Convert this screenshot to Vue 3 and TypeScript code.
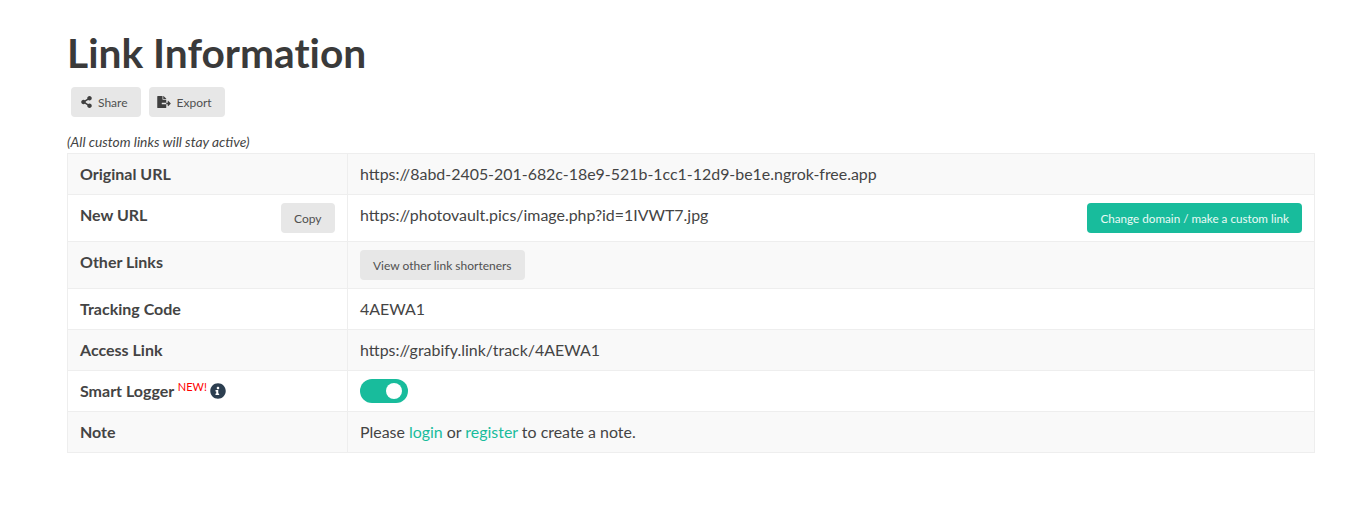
<script setup lang="ts">
const shareIcon = "M352 320c-22.608 0-43.387 7.819-59.79 20.895l-102.486-64.054a96.551 96.551 0 0 0 0-41.683l102.486-64.054C308.613 184.181 329.392 192 352 192c53.019 0 96-42.981 96-96S405.019 0 352 0s-96 42.981-96 96c0 7.158.79 14.13 2.276 20.841L155.79 180.895C139.387 167.819 118.608 160 96 160c-53.019 0-96 42.981-96 96s42.981 96 96 96c22.608 0 43.387-7.819 59.79-20.895l102.486 64.054A96.301 96.301 0 0 0 256 416c0 53.019 42.981 96 96 96s96-42.981 96-96-42.981-96-96-96z";
const exportIcon = "M384 121.9c0-6.3-2.5-12.4-7-16.9L279.1 7c-4.5-4.5-10.6-7-17-7H256v128h128zM571 308l-95.7-96.4c-10.1-10.1-27.4-3-27.4 11.3V288h-64v64h64v65.2c0 14.3 17.3 21.4 27.4 11.3L571 332c6.6-6.6 6.6-17.4 0-24zm-379 28v-32c0-8.8 7.2-16 16-16h176V160H248c-13.2 0-24-10.8-24-24V0H24C10.7 0 0 10.7 0 24v464c0 13.3 10.7 24 24 24h336c13.3 0 24-10.7 24-24V352H208c-8.8 0-16-7.2-16-16z";
const infoIcon = "M256 8C119.043 8 8 119.083 8 256c0 136.997 111.043 248 248 248s248-111.003 248-248C504 119.083 392.957 8 256 8zm0 110c23.196 0 42 18.804 42 42s-18.804 42-42 42-42-18.804-42-42 18.804-42 42-42zm56 254c0 6.627-5.373 12-12 12h-112c-6.627 0-12-5.373-12-12v-24c0-6.627 5.373-12 12-12h12v-64h-12c-6.627 0-12-5.373-12-12v-24c0-6.627 5.373-12 12-12h64c6.627 0 12 5.373 12 12v100h12c6.627 0 12 5.373 12 12v24z";
</script>

<template>
  <main class="page">
    <h1 class="title">Link Information</h1>
    <div class="actions">
      <button class="btn">
        <svg class="icon share" viewBox="0 0 448 512"><path :d="shareIcon" /></svg>Share
      </button>
      <button class="btn">
        <svg class="icon export" viewBox="0 0 576 512"><path :d="exportIcon" /></svg>Export
      </button>
    </div>
    <p class="hint">(All custom links will stay active)</p>
    <table class="info">
      <tbody>
        <tr>
          <th>Original URL</th>
          <td>https://8abd-2405-201-682c-18e9-521b-1cc1-12d9-be1e.ngrok-free.app</td>
        </tr>
        <tr>
          <th>
            <div class="split">New URL<button class="btn">Copy</button></div>
          </th>
          <td>
            <div class="split">
              https://photovault.pics/image.php?id=1IVWT7.jpg
              <button class="btn primary">Change domain / make a custom link</button>
            </div>
          </td>
        </tr>
        <tr>
          <th>Other Links</th>
          <td><button class="btn">View other link shorteners</button></td>
        </tr>
        <tr>
          <th>Tracking Code</th>
          <td>4AEWA1</td>
        </tr>
        <tr>
          <th>Access Link</th>
          <td>https://grabify.link/track/4AEWA1</td>
        </tr>
        <tr>
          <th>
            Smart Logger <sup class="new">NEW!</sup>
            <svg class="info-icon" viewBox="0 0 512 512"><path :d="infoIcon" /></svg>
          </th>
          <td class="toggle-cell">
            <span class="toggle"><span class="knob"></span></span>
          </td>
        </tr>
        <tr>
          <th>Note</th>
          <td>Please <a href="#">login</a> or <a href="#">register</a> to create a note.</td>
        </tr>
      </tbody>
    </table>
  </main>
</template>

<style scoped>
.page {
  padding: 0 44px 0 67px;
  font-family: Lato, "Liberation Sans", sans-serif;
  font-size: 16px;
  line-height: 24px;
  color: #444;
}
.title {
  margin: 0;
  padding-top: 29px;
  font-size: 40.7px;
  line-height: 48px;
  font-weight: 700;
  font-variant-ligatures: none;
  color: #3a3a3a;
}
.actions {
  display: flex;
  gap: 8px;
  margin: 10px 0 0 4px;
}
.btn {
  display: inline-flex;
  align-items: center;
  height: 30px;
  padding: 0 13px;
  border: 0;
  border-radius: 4px;
  background: #e7e7e7;
  color: #505050;
  font-family: inherit;
  font-size: 12px;
  white-space: nowrap;
}
.btn.primary {
  background: #18bc9c;
  color: #eafaf6;
  font-size: 11.7px;
}
.split > .btn:not(.primary) {
  padding: 0 13.5px;
}
.icon {
  fill: #3f3f3f;
  height: 12px;
  margin-right: 6px;
}
.icon.share {
  width: 11px;
  margin-left: -3px;
}
.icon.export {
  width: 14px;
  margin-left: -5px;
}
.hint {
  margin: 15px 0 1px;
  font-size: 13.8px;
  line-height: 20px;
  font-style: italic;
}
.info {
  width: 100%;
  border-collapse: collapse;
  table-layout: fixed;
}
.info th,
.info td {
  border: 1px solid #eee;
  padding: 8px 12px;
  vertical-align: top;
  text-align: left;
}
.info td {
  font-size: 15.93px;
}
.info th {
  width: 255px;
  font-weight: 700;
}
.info tr:nth-child(odd) th,
.info tr:nth-child(odd) td {
  background: #f9f9f9;
}
.split {
  display: flex;
  justify-content: space-between;
  align-items: flex-start;
}
.new {
  color: #f00;
  font-size: 11px;
  font-weight: 400;
  line-height: 0;
}
.info-icon {
  width: 16px;
  height: 16px;
  fill: #2c3e50;
  vertical-align: -2px;
  margin-left: 3px;
}
.toggle-cell {
  line-height: 0;
}
.toggle {
  display: inline-block;
  position: relative;
  width: 48px;
  height: 24px;
  border-radius: 12px;
  background: #18bc9c;
}
.knob {
  position: absolute;
  top: 4px;
  right: 6px;
  width: 16px;
  height: 16px;
  border-radius: 50%;
  background: #fff;
}
a {
  color: #18bc9c;
  text-decoration: none;
}
</style>
